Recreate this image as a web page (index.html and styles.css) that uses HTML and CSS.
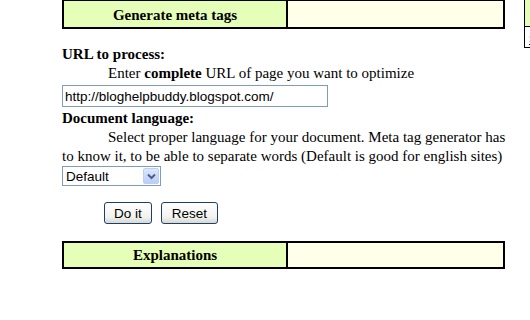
FILE: index.html
```html
<!DOCTYPE html>
<html lang="en">

<head>
    <meta charset="UTF-8">
    <title>Meta tag generator</title>
    <link rel="stylesheet" href="styles.css">
</head>

<body>
    <div class="page">
        <!-- Main column -->
        <div class="main">
            <table class="box head-box">
                <tr>
                    <td class="box-title">Generate meta tags</td>
                    <td class="box-side"></td>
                </tr>
            </table>

            <form class="opts">
                <div class="label">URL to process:</div>
                <p class="hint">Enter <b>complete</b> URL of page you want to optimize</p>
                <input class="url" type="text" value="http://bloghelpbuddy.blogspot.com/">

                <div class="label label-lang">Document language:</div>
                <p class="hint">Select proper language for your document. Meta tag generator has to know it, to be able to separate words (Default is good for english sites)</p>
                <div class="select-wrap">
                    <select class="lang">
                        <option>Default</option>
                    </select>
                    <span class="select-btn">
                        <svg width="9" height="7" viewBox="0 0 9 7">
                            <path d="M1 1.5 L4.5 5 L8 1.5" fill="none" stroke="#4d6185" stroke-width="2"/>
                        </svg>
                    </span>
                </div>

                <div class="actions">
                    <button type="button" class="btn">Do it</button>
                    <button type="reset" class="btn">Reset</button>
                </div>
            </form>

            <table class="box explain-box">
                <tr>
                    <td class="box-title">Explanations</td>
                    <td class="box-side"></td>
                </tr>
            </table>
        </div>

        <!-- Side column (cut off at the edge) -->
        <div class="side">
            <div class="side-top"></div>
            <div class="side-body"><a href="#">Submit</a></div>
        </div>
    </div>
</body>

</html>
```

FILE: styles.css
```css
body {
    margin: 0;
    padding: 0;
    background-color: #fff;
    font-family: "Liberation Serif", "Times New Roman", serif;
    font-size: 15px;
    color: #000;
    overflow: hidden;
}

.page {
    display: flex;
    align-items: flex-start;
}

.main {
    width: 450px;
    padding-left: 62px;
    flex-shrink: 0;
}

/* Header boxes */
.box {
    width: 443px;
    border-collapse: collapse;
    border: 2px solid #000;
}

.box td {
    border: 2px solid #000;
    height: 24px;
    padding: 0;
}

.box-title {
    width: 222px;
    background-color: #e6ffb8;
    font-weight: bold;
    text-align: center;
    vertical-align: middle;
}

.box-side {
    background-color: #ffffea;
}

.head-box {
    margin-top: -1px;
}

.head-box .box-title {
    padding-top: 2px;
}

.explain-box {
    margin-top: 17px;
}

/* Form */
.opts {
    margin: 16px 0 0 0;
}

.label {
    font-weight: bold;
    line-height: 19px;
}

.label-lang {
    margin-top: 2px;
}

.hint {
    margin: 0;
    line-height: 19px;
    text-indent: 46px;
}

.url {
    display: block;
    box-sizing: border-box;
    width: 266px;
    height: 22px;
    margin-top: 2px;
    padding: 1px 2px 0;
    border: 1px solid #7f9db9;
    font-family: "Liberation Sans", Arial, sans-serif;
    font-size: 13.5px;
    color: #000;
    outline: none;
}

.select-wrap {
    position: relative;
    width: 99px;
    height: 20px;
}

.lang {
    box-sizing: border-box;
    width: 99px;
    height: 20px;
    padding: 0 0 0 3px;
    border: 1px solid #7f9db9;
    border-radius: 0;
    background-color: #fff;
    appearance: none;
    -webkit-appearance: none;
    font-family: "Liberation Sans", Arial, sans-serif;
    font-size: 13.5px;
    color: #000;
}

.select-btn {
    position: absolute;
    top: 2px;
    right: 2px;
    width: 16px;
    height: 16px;
    box-sizing: border-box;
    border: 1px solid #bccdf6;
    border-radius: 2px;
    background: linear-gradient(#dde7fd, #b9cdf7);
    display: flex;
    align-items: center;
    justify-content: center;
}

.actions {
    display: flex;
    gap: 9px;
    margin-top: 16px;
    padding-left: 42px;
}

.btn {
    height: 22px;
    padding: 0 8px;
    border: 1px solid #1c3f6e;
    border-radius: 3px;
    background: linear-gradient(#ffffff, #f2f2ee 70%, #d8d8d2);
    font-family: "Liberation Sans", Arial, sans-serif;
    font-size: 13.5px;
    color: #000;
}

.btn:first-child {
    width: 48px;
}

.btn:last-child {
    width: 57px;
}

/* Side column */
.side {
    margin-left: 12px;
    margin-top: -1px;
    width: 60px;
    height: 49px;
    box-sizing: border-box;
    border: 1px solid #000;
    flex-shrink: 0;
}

.side-top {
    height: 26px;
    background-color: #e6ffb8;
    border-bottom: 1px solid #000;
}

.side-body {
    padding: 6px 0 0 4px;
    font-family: "Liberation Sans", Arial, sans-serif;
    font-size: 11px;
}

.side-body a {
    color: #00008b;
}
```
